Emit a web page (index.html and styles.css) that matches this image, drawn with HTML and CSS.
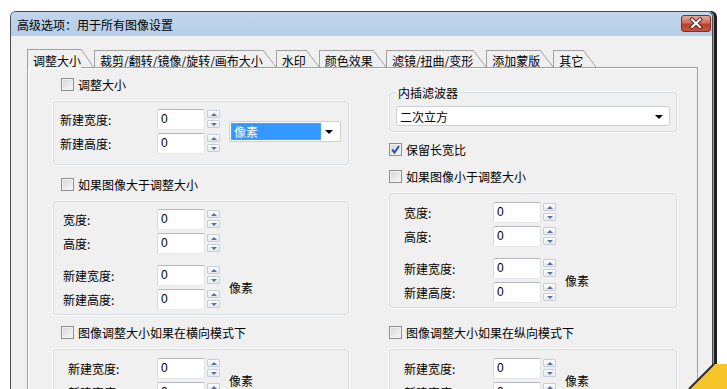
FILE: index.html
```html
<!DOCTYPE html>
<html lang="zh-CN">
<head>
    <meta charset="UTF-8">
    <title>高级选项</title>
    <link rel="stylesheet" href="styles.css">
</head>
<body>
    <div class="window">
        <div class="titlebar">
            <span class="title">高级选项：用于所有图像设置</span>
            <div class="close">
                <svg width="30" height="17" viewBox="0 0 30 17">
                    <path d="M11 4.5 L19 12 M19 4.5 L11 12" stroke="#5a2520" stroke-width="4" stroke-linecap="square"/>
                    <path d="M11 4.5 L19 12 M19 4.5 L11 12" stroke="#fff" stroke-width="2" stroke-linecap="square"/>
                </svg>
            </div>
        </div>
        <div class="content">
            <div class="tabs">
                <div class="tab active">调整大小</div>
                <div class="tab">裁剪/翻转/镜像/旋转/画布大小</div>
                <div class="tab">水印</div>
                <div class="tab">颜色效果</div>
                <div class="tab">滤镜/扭曲/变形</div>
                <div class="tab">添加蒙版</div>
                <div class="tab">其它</div>
            </div>
            <div class="pane">
                <div class="col col-left">
                    <label class="check indent"><span class="box"></span>调整大小</label>
                    <div class="group g-resize">
                        <div class="fields">
                            <div class="field"><span class="lbl">新建宽度:</span><span class="num">0</span><span class="spin"><i class="up"></i><i class="down"></i></span></div>
                            <div class="field"><span class="lbl">新建高度:</span><span class="num">0</span><span class="spin"><i class="up"></i><i class="down"></i></span></div>
                        </div>
                        <div class="select unit-select"><span class="picked">像素</span><span class="arrow"></span></div>
                    </div>

                    <label class="check indent mt-11"><span class="box"></span>如果图像大于调整大小</label>
                    <div class="group g-left">
                        <div class="pair">
                            <div class="fields">
                                <div class="field"><span class="lbl">宽度:</span><span class="num">0</span><span class="spin"><i class="up"></i><i class="down"></i></span></div>
                                <div class="field"><span class="lbl">高度:</span><span class="num">0</span><span class="spin"><i class="up"></i><i class="down"></i></span></div>
                            </div>
                        </div>
                        <div class="pair">
                            <div class="fields">
                                <div class="field"><span class="lbl">新建宽度:</span><span class="num">0</span><span class="spin"><i class="up"></i><i class="down"></i></span></div>
                                <div class="field"><span class="lbl">新建高度:</span><span class="num">0</span><span class="spin"><i class="up"></i><i class="down"></i></span></div>
                            </div>
                            <span class="unit">像素</span>
                        </div>
                    </div>

                    <label class="check indent mt-9"><span class="box"></span>图像调整大小如果在横向模式下</label>
                    <div class="group g-mode">
                        <div class="pair">
                            <div class="fields">
                                <div class="field"><span class="lbl">新建宽度:</span><span class="num">0</span><span class="spin"><i class="up"></i><i class="down"></i></span></div>
                                <div class="field"><span class="lbl">新建高度:</span><span class="num">0</span><span class="spin"><i class="up"></i><i class="down"></i></span></div>
                            </div>
                            <span class="unit">像素</span>
                        </div>
                    </div>
                </div>

                <div class="col col-right">
                    <fieldset class="filter">
                        <legend>内插滤波器</legend>
                        <div class="select filter-select"><span class="value">二次立方</span><span class="arrow"></span></div>
                    </fieldset>

                    <label class="check mt-9"><span class="box checked">
                        <svg width="11" height="11" viewBox="0 0 11 11"><path d="M2 5.5 L4.5 8.5 L9 2" fill="none" stroke="#2b4fa8" stroke-width="2"/></svg>
                    </span>保留长宽比</label>
                    <label class="check mt-10"><span class="box"></span>如果图像小于调整大小</label>
                    <div class="group g-right">
                        <div class="pair">
                            <div class="fields">
                                <div class="field"><span class="lbl">宽度:</span><span class="num">0</span><span class="spin"><i class="up"></i><i class="down"></i></span></div>
                                <div class="field"><span class="lbl">高度:</span><span class="num">0</span><span class="spin"><i class="up"></i><i class="down"></i></span></div>
                            </div>
                        </div>
                        <div class="pair">
                            <div class="fields">
                                <div class="field"><span class="lbl">新建宽度:</span><span class="num">0</span><span class="spin"><i class="up"></i><i class="down"></i></span></div>
                                <div class="field"><span class="lbl">新建高度:</span><span class="num">0</span><span class="spin"><i class="up"></i><i class="down"></i></span></div>
                            </div>
                            <span class="unit">像素</span>
                        </div>
                    </div>

                    <label class="check mt-16"><span class="box"></span>图像调整大小如果在纵向模式下</label>
                    <div class="group g-right g-mode">
                        <div class="pair">
                            <div class="fields">
                                <div class="field"><span class="lbl">新建宽度:</span><span class="num">0</span><span class="spin"><i class="up"></i><i class="down"></i></span></div>
                                <div class="field"><span class="lbl">新建高度:</span><span class="num">0</span><span class="spin"><i class="up"></i><i class="down"></i></span></div>
                            </div>
                            <span class="unit">像素</span>
                        </div>
                    </div>
                </div>
            </div>
        </div>
    </div>

    <svg class="corner" width="40" height="28" viewBox="0 0 40 28">
        <polygon points="2,28 27,3 40,3 40,28" fill="#f6c52a"/>
        <path d="M2 28 L27 3" stroke="#2a2a2a" stroke-width="2"/>
    </svg>
</body>
</html>
```

FILE: styles.css
```css
html, body {
    margin: 0;
    padding: 0;
    height: 389px;
    overflow: hidden;
    background: #fff;
    font-family: "Noto Sans CJK SC", "Liberation Sans", sans-serif;
    font-size: 12px;
    line-height: 17px;
    color: #000;
}

.window {
    margin: 11px 0 0 10px;
    width: 703px;
    height: 400px;
    box-sizing: border-box;
    border: 1px solid #4a4a4a;
    border-bottom: none;
    border-radius: 6px 6px 0 0;
    box-shadow: 1px 0 0 #5eb3e4, 4px 0 0 #1f1f1f;
    background: #f0f0f0;
    display: flex;
    flex-direction: column;
}

.titlebar {
    height: 24px;
    flex: none;
    display: flex;
    justify-content: space-between;
    align-items: center;
    padding-left: 6px;
    border-radius: 5px 5px 0 0;
    background: linear-gradient(#c2d6ed, #b6cde7);
}

.close {
    align-self: flex-start;
    margin: 3px 1px 0 0;
    width: 30px;
    height: 17px;
    box-sizing: border-box;
    border: 1px solid #7d3127;
    border-radius: 3px;
    background: linear-gradient(#e4a898, #d0705f 45%, #bb412c 55%, #c9563f);
}

.close svg {
    display: block;
    margin: -1px;
}

.content {
    flex: 1;
    display: flex;
    flex-direction: column;
    padding: 14px 14px 0 16px;
}

/* tabs */
.tabs {
    display: flex;
    align-items: flex-end;
    height: 17px;
}

.tab {
    height: 17px;
    box-sizing: border-box;
    padding: 4px 13px 0 5px;
    line-height: 14px;
    white-space: nowrap;
    border-left: 1px solid #a0a0a0;
    background:
        linear-gradient(#a0a0a0, #a0a0a0) left top / calc(100% - 13px) 1px no-repeat,
        linear-gradient(to top right, transparent calc(50% - 0.8px), #a0a0a0 50%, transparent calc(50% + 0.8px)) right top / 13px 100% no-repeat;
}

.tab.active {
    position: relative;
    z-index: 1;
    height: 19px;
    padding-top: 5px;
    margin-bottom: -1px;
    background:
        linear-gradient(#a0a0a0, #a0a0a0) left top / calc(100% - 13px) 1px no-repeat,
        linear-gradient(to top right, transparent calc(50% - 0.8px), #a0a0a0 50%, transparent calc(50% + 0.8px)) right top / 13px 100% no-repeat,
        linear-gradient(#f0f0f0, #f0f0f0) left top / calc(100% - 13px) 100% no-repeat;
}

.pane {
    flex: 1;
    display: flex;
    gap: 40px;
    padding: 8px 0 0 25px;
    border: 1px solid #a0a0a0;
    border-bottom: none;
    box-shadow: inset 1px 1px 0 #fff;
}

.col {
    display: flex;
    flex-direction: column;
}

.col-left {
    width: 296px;
}

.col-right {
    width: 288px;
}

/* checkboxes */
.check {
    display: flex;
    align-items: center;
    gap: 4px;
    height: 17px;
    white-space: nowrap;
}

.check.indent {
    padding-left: 8px;
}

.box {
    width: 13px;
    height: 13px;
    box-sizing: border-box;
    border: 1px solid #8e8f8f;
    background: linear-gradient(135deg, #d6d6d6, #f8f8f8);
    box-shadow: inset 0 0 0 1px #f2f2f2;
}

.box svg {
    display: block;
}

.mt-9 { margin-top: 9px; }
.mt-10 { margin-top: 10px; }
.mt-11 { margin-top: 11px; }
.mt-16 { margin-top: 16px; }

/* group boxes */
.group {
    margin-top: 8px;
    border: 1px solid #d5dde4;
    border-radius: 3px;
    box-shadow: 0 0 0 1px #fafafa;
}

.g-resize {
    display: flex;
    align-items: center;
    padding: 7px 0 11px 6px;
}

.g-resize .lbl {
    width: 97px;
}

.g-left,
.g-right {
    display: flex;
    flex-direction: column;
    gap: 12px;
    padding: 7px 0 5px 9px;
}

.g-left .lbl {
    width: 94px;
}

.g-right {
    padding: 8px 0 5px 14px;
}

.g-right .lbl {
    width: 89px;
}

.g-mode {
    padding: 8px 0 0 14px;
    height: 60px;
}

.g-mode .lbl {
    width: 89px;
}

.pair {
    display: flex;
    align-items: center;
}

.fields {
    display: flex;
    flex-direction: column;
    gap: 4px;
}

.field {
    display: flex;
    align-items: center;
    height: 20px;
}

.num {
    width: 48px;
    height: 21px;
    box-sizing: border-box;
    padding: 1px 3px;
    line-height: 17px;
    font-family: "Liberation Sans", sans-serif;
    background: #fff;
    border: 1px solid;
    border-color: #b4b7bb #dde1e5 #e5e8eb #d4d8dc;
    border-radius: 2px;
}

.spin {
    display: flex;
    flex-direction: column;
    gap: 2px;
    margin-left: 2px;
    width: 13px;
}

.spin i {
    height: 8px;
    box-sizing: border-box;
    border: 1px solid #c8ced5;
    border-radius: 1px;
    background: linear-gradient(#ffffff, #e4e8ee);
    display: flex;
    align-items: center;
    justify-content: center;
}

.spin i::before {
    content: "";
    border-left: 3px solid transparent;
    border-right: 3px solid transparent;
}

.spin .up::before {
    border-bottom: 3px solid #5a6f9c;
}

.spin .down::before {
    border-top: 3px solid #5a6f9c;
}

.unit {
    margin-left: 9px;
}

/* drop downs */
.select {
    display: flex;
    align-items: center;
    height: 21px;
    box-sizing: border-box;
    background: #fff;
    border: 1px solid #cdd2d7;
    border-radius: 2px;
}

.unit-select {
    width: 112px;
    margin-left: 9px;
    padding: 1px;
}

.picked {
    width: 90px;
    height: 17px;
    box-sizing: border-box;
    padding-left: 2px;
    line-height: 15px;
    color: #fff;
    background: #3399ff;
    border: 1px dotted #e0823a;
}

.arrow {
    margin: 1px 6px 0 auto;
    border-left: 4px solid transparent;
    border-right: 4px solid transparent;
    border-top: 4px solid #000;
}

.filter {
    margin: 8px 0 0;
    padding: 5px 6px;
    border: 1px solid #d5dde4;
    border-radius: 3px;
    box-shadow: 0 0 0 1px #fafafa;
}

.filter legend {
    padding: 0 2px;
    line-height: 17px;
}

.filter-select {
    height: 20px;
    padding-left: 3px;
}

.corner {
    position: absolute;
    right: 0;
    bottom: 0;
}
```
